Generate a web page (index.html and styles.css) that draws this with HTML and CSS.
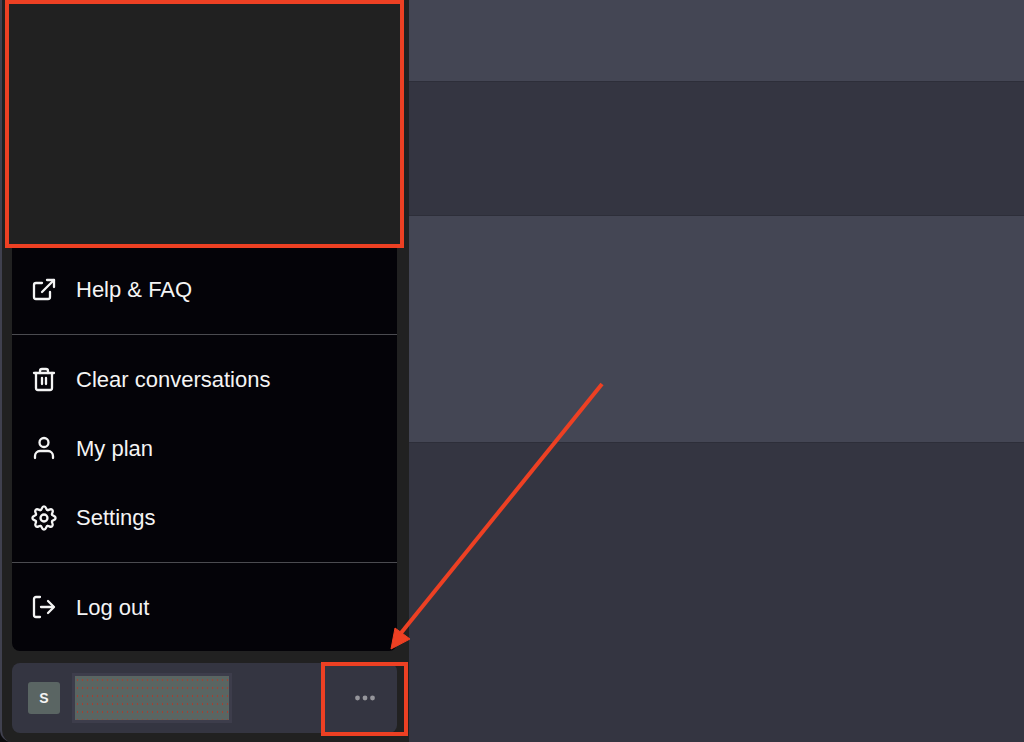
FILE: index.html
```html
<!DOCTYPE html>
<html lang="en">
<head>
    <meta charset="UTF-8">
    <meta name="viewport" content="width=device-width, initial-scale=1.0">
    <title>Account menu</title>
    <link rel="stylesheet" href="styles.css">
</head>
<body>
    <div class="app">
        <aside class="sidebar">
            <div class="history"></div>
            <nav class="menu">
                <div class="menu-group">
                    <a href="#" class="menu-item">
                        <svg class="icon" viewBox="0 0 24 24"><path d="M18 14v5a2 2 0 0 1-2 2H4a2 2 0 0 1-2-2V7a2 2 0 0 1 2-2H10"/><path d="M15 2h7v7"/><path d="M10 14L22 2"/></svg>
                        Help &amp; FAQ
                    </a>
                </div>
                <div class="menu-group">
                    <button type="button" class="menu-item">
                        <svg class="icon" viewBox="0 0 24 24"><path d="M2 5h20"/><path d="M20 5v15a2 2 0 0 1-2 2H6a2 2 0 0 1-2-2V5"/><path d="M8 5V3a2 2 0 0 1 2-2h4a2 2 0 0 1 2 2v2"/><path d="M10 10v6"/><path d="M14 10v6"/></svg>
                        Clear conversations
                    </button>
                    <button type="button" class="menu-item">
                        <svg class="icon" viewBox="0 0 24 24"><path d="M21 21v-2a5 5 0 0 0-5-5H8a5 5 0 0 0-5 5v2"/><circle cx="12" cy="5.5" r="4.5"/></svg>
                        My plan
                    </button>
                    <button type="button" class="menu-item">
                        <svg class="icon" viewBox="-12 -12 24 24">
                            <circle r="3.5"/>
                            <path id="tooth" d="M8.04-3.33C8.73-1.67 11.6-2.6 11.6 0S8.73 1.67 8.04 3.33"/>
                            <use href="#tooth" transform="rotate(45)"/>
                            <use href="#tooth" transform="rotate(90)"/>
                            <use href="#tooth" transform="rotate(135)"/>
                            <use href="#tooth" transform="rotate(180)"/>
                            <use href="#tooth" transform="rotate(225)"/>
                            <use href="#tooth" transform="rotate(270)"/>
                            <use href="#tooth" transform="rotate(315)"/>
                        </svg>
                        Settings
                    </button>
                </div>
                <div class="menu-group">
                    <button type="button" class="menu-item">
                        <svg class="icon" viewBox="0 0 24 24"><path d="M8 1H4a2 2 0 0 0-2 2v16a2 2 0 0 0 2 2H8"/><path d="M16 17l6-6-6-6"/><path d="M21 11H9"/></svg>
                        Log out
                    </button>
                </div>
            </nav>
            <div class="user">
                <span class="avatar">S</span>
                <span class="user-name"></span>
                <button type="button" class="more" aria-label="Account options">
                    <svg viewBox="0 0 22 6"><circle cx="3.5" cy="3" r="2.4"/><circle cx="11" cy="3" r="2.4"/><circle cx="18.5" cy="3" r="2.4"/></svg>
                </button>
                <div class="highlight"></div>
            </div>
            <!-- arrow pointing at the options button -->
            <svg class="arrow" viewBox="0 0 216 270"><path class="arrow-line" d="M214 3L13 252"/><path class="arrow-head" d="M3 268L7 247L22 258z"/></svg>
        </aside>
        <main class="chat">
            <div class="message message-bot message-first"></div>
            <div class="message message-user"></div>
            <div class="message message-bot message-long"></div>
        </main>
    </div>
</body>
</html>
```

FILE: styles.css
```css
* {
    box-sizing: border-box;
}
body {
    margin: 0;
    background-color: #0c0c0e;
    font-family: "Liberation Sans", Arial, sans-serif;
}
.app {
    display: flex;
    height: 100vh;
}

/* Sidebar */
.sidebar {
    position: relative;
    display: flex;
    flex-direction: column;
    flex: 0 0 409px;
    padding: 0 12px 9px 10px;
    border-left: 2px solid #40414f;
    border-bottom-left-radius: 12px;
    background-color: #212121;
}
.history {
    flex: 1;
    margin: 0 -7px;
    border: 4px solid #ed4023;
}
.menu {
    overflow: hidden;
    border-radius: 0 0 8px 8px;
    background-color: #040308;
}
.menu-group {
    padding: 10px 0;
}
.menu-group:first-child {
    padding-top: 7px;
}
.menu-group:last-child {
    padding-bottom: 9px;
}
.menu-group + .menu-group {
    border-top: 1px solid #4b4b50;
}
.menu-item {
    display: flex;
    align-items: center;
    gap: 20px;
    width: 100%;
    height: 69px;
    padding: 0 20px;
    border: 0;
    background: none;
    color: #f4f4f4;
    font-family: inherit;
    font-size: 22px;
    text-align: left;
    text-decoration: none;
    cursor: pointer;
}
.menu-item:hover {
    background-color: #343541;
}
.icon {
    width: 24px;
    height: 24px;
    overflow: visible;
    fill: none;
    stroke: currentColor;
    stroke-width: 2.3;
    stroke-linecap: round;
    stroke-linejoin: round;
}

/* User row */
.user {
    position: relative;
    display: flex;
    align-items: center;
    gap: 15px;
    height: 70px;
    margin-top: 12px;
    padding: 0 16px;
    border-radius: 8px;
    background-color: #343541;
}
.avatar {
    width: 32px;
    height: 32px;
    border-radius: 3px;
    background-color: #5a6563;
    color: #f4f4f4;
    font-size: 14px;
    font-weight: bold;
    line-height: 32px;
    text-align: center;
}
.user-name {
    width: 154px;
    height: 44px;
    background-color: #5a6562;
    background-image: radial-gradient(circle, #a04234 1px, transparent 1px);
    background-size: 5px 8px;
    outline: 3px solid #3d3d4b;
}
.more {
    display: flex;
    margin-left: auto;
    padding: 5px;
    border: 0;
    background: none;
    cursor: pointer;
}
.more svg {
    width: 22px;
    height: 6px;
    fill: #96969c;
}
.highlight {
    position: absolute;
    top: -1px;
    right: -11px;
    width: 87px;
    height: 74px;
    border: 4px solid #ed4023;
    pointer-events: none;
}
.arrow {
    position: absolute;
    left: 386px;
    bottom: 91px;
    width: 216px;
    height: 270px;
    pointer-events: none;
}
.arrow-line {
    fill: none;
    stroke: #ed4023;
    stroke-width: 4;
}
.arrow-head {
    fill: #ed4023;
    stroke: #ed4023;
}

/* Conversation */
.chat {
    flex: 1;
    background-color: #343541;
}
.message {
    border-bottom: 1px solid #2d2e39;
}
.message-bot {
    background-color: #444654;
}
.message-first {
    height: 82px;
}
.message-user {
    height: 134px;
}
.message-long {
    height: 227px;
}
```
